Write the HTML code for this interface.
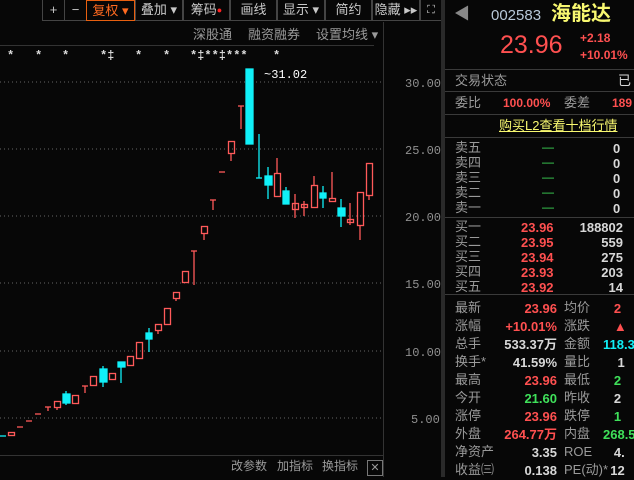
<!DOCTYPE html><html><head><meta charset="utf-8"><style>
body{margin:0;width:634px;height:477px;background:#070707;overflow:hidden;position:relative;font-family:"Liberation Sans","Noto Sans CJK SC",sans-serif;}
.a{position:absolute;white-space:nowrap;line-height:1;}
.g{color:#9a9a9a}.r{color:#ff5050}.gr{color:#3fe05a}.w{color:#d8d8d8}.c{color:#10f0f8}.y{color:#f8f870}
.tb{position:absolute;top:0;height:21px;border:1px solid #444;border-top:none;color:#c8c8c8;font-size:13px;text-align:center;line-height:20px;box-sizing:border-box}
.hl{position:absolute;left:445px;width:189px;height:1px;background:#3a3a3a}
.rt{font-size:13px}
.n{font-weight:bold;font-size:13px}
</style></head><body>
<div class="tb" style="left:42px;width:23px">+</div>
<div class="tb" style="left:64px;width:23px">−</div>
<div class="tb" style="left:86px;width:49px;border:1px solid #e86010;color:#ff6a20">复权 ▾</div>
<div class="tb" style="left:135px;width:48px">叠加 ▾</div>
<div class="tb" style="left:183px;width:47px">筹码<span style="color:#f22;font-size:9px;vertical-align:top">●</span></div>
<div class="tb" style="left:230px;width:47px">画线</div>
<div class="tb" style="left:277px;width:48px">显示 ▾</div>
<div class="tb" style="left:325px;width:47px">简约</div>
<div class="tb" style="left:372px;width:48px">隐藏 ▸▸</div>
<div class="tb" style="left:420px;width:22px;font-size:11px">⛶</div>
<div class="a g" style="left:193px;top:28px;font-size:13px">深股通</div>
<div class="a g" style="left:248px;top:28px;font-size:13px">融资融券</div>
<div class="a g" style="left:316px;top:28px;font-size:13px">设置均线 ▾</div>
<div style="position:absolute;left:0;top:45px;width:374px;height:1px;background:#333"></div>
<div style="position:absolute;left:383px;top:22px;width:1px;height:455px;background:#333"></div>
<div style="position:absolute;left:441px;top:0;width:4px;height:477px;background:#2a2a2a"></div>
<div style="position:absolute;left:0;top:455px;width:383px;height:1px;background:#333"></div>
<div class="a g" style="left:231px;top:460px;font-size:12px">改参数</div>
<div class="a g" style="left:277px;top:460px;font-size:12px">加指标</div>
<div class="a g" style="left:322px;top:460px;font-size:12px">换指标</div>
<div class="a g" style="left:367px;top:460px;width:14px;height:14px;border:1px solid #777;text-align:center;font-size:11px;line-height:14px">✕</div>
<svg style="position:absolute;left:0;top:0" width="445" height="477">
<g stroke="#666" stroke-dasharray="1,3">
<line x1="0" y1="82" x2="381" y2="82"/><line x1="0" y1="149" x2="381" y2="149"/><line x1="0" y1="216" x2="381" y2="216"/><line x1="0" y1="283" x2="381" y2="283"/><line x1="0" y1="351" x2="381" y2="351"/><line x1="0" y1="418" x2="381" y2="418"/></g>
<g fill="#909090" font-family="Liberation Mono,monospace" font-size="12"><text x="405" y="87">30.00</text><text x="405" y="154">25.00</text><text x="405" y="221">20.00</text><text x="405" y="288">15.00</text><text x="405" y="356">10.00</text><text x="411" y="423">5.00</text></g>
<g fill="#ddd" font-size="12" font-weight="bold" font-family="Liberation Mono,monospace"><text x="7" y="59">*</text><text x="35" y="59">*</text><text x="62" y="59">*</text><text x="100" y="59">*‡</text><text x="135" y="59">*</text><text x="163" y="59">*</text><text x="190" y="59">*‡**‡***</text><text x="273" y="59">*</text></g>
<text x="264" y="78" fill="#fff" font-size="12" font-family="Liberation Mono,monospace">~31.02</text>
<g stroke="#ff5a5a" fill="none" stroke-width="1.3">
<rect x="8.5" y="432.5" width="6" height="3"/><line x1="17" y1="427" x2="23" y2="427"/><line x1="26" y1="421" x2="32" y2="421"/><line x1="35" y1="414" x2="41" y2="414"/><line x1="45" y1="407" x2="51" y2="407"/><line x1="48" y1="407" x2="48" y2="411"/>
<rect x="54.5" y="401.5" width="6" height="6"/><line x1="57" y1="407" x2="57" y2="410"/><rect x="72.5" y="395.5" width="6" height="8"/><line x1="82" y1="386" x2="88" y2="386"/><line x1="85" y1="386" x2="85" y2="393"/>
<rect x="90.5" y="376.5" width="6" height="9"/><rect x="109.5" y="373.5" width="6" height="6"/><rect x="127.5" y="356.5" width="6" height="9"/><rect x="136.5" y="342.5" width="6" height="16"/>
<rect x="155.5" y="324.5" width="6" height="6"/><line x1="158" y1="330" x2="158" y2="334"/><rect x="164.5" y="308.5" width="6" height="16"/><rect x="173.5" y="292.5" width="6" height="6"/><line x1="176" y1="298" x2="176" y2="301"/><rect x="182.5" y="271.5" width="6" height="11"/>
<line x1="191" y1="251" x2="197" y2="251"/><line x1="194" y1="251" x2="194" y2="285"/><rect x="201.5" y="226.5" width="6" height="7"/><line x1="204" y1="233" x2="204" y2="240"/>
<line x1="210" y1="200" x2="216" y2="200"/><line x1="213" y1="200" x2="213" y2="210"/><line x1="219" y1="172" x2="225" y2="172"/>
<rect x="228.5" y="141.5" width="6" height="12"/><line x1="231" y1="153" x2="231" y2="161"/><line x1="238" y1="106" x2="244" y2="106"/><line x1="241" y1="106" x2="241" y2="129"/>
<rect x="274.5" y="173.5" width="6" height="23"/><line x1="277" y1="158" x2="277" y2="173"/><rect x="292.5" y="203.5" width="6" height="6"/><line x1="295" y1="194" x2="295" y2="218"/>
<rect x="301.5" y="204.5" width="6" height="3"/><line x1="304" y1="201" x2="304" y2="216"/><rect x="311.5" y="185.5" width="6" height="22"/><line x1="314" y1="176" x2="314" y2="185"/>
<rect x="329.5" y="198.5" width="6" height="3"/><line x1="332" y1="172" x2="332" y2="198"/><rect x="347.5" y="219.5" width="6" height="3"/><line x1="350" y1="203" x2="350" y2="225"/>
<rect x="357.5" y="192.5" width="6" height="33"/><line x1="360" y1="225" x2="360" y2="240"/><rect x="366.5" y="163.5" width="6" height="32"/><line x1="369" y1="195" x2="369" y2="200"/>
</g>
<g fill="#10f0f8" stroke="#10f0f8" stroke-width="1.3">
<line x1="0" y1="436" x2="6" y2="436"/><line x1="66" y1="391" x2="66" y2="405"/><rect x="63" y="394" width="7" height="9"/>
<line x1="103" y1="366" x2="103" y2="387"/><rect x="100" y="369" width="7" height="13"/><line x1="121" y1="362" x2="121" y2="383"/><rect x="118" y="362" width="7" height="5"/>
<line x1="149" y1="328" x2="149" y2="352"/><rect x="146" y="333" width="6" height="6"/><rect x="246" y="69" width="7" height="75"/>
<line x1="259" y1="134" x2="259" y2="178"/><line x1="256" y1="178" x2="262" y2="178"/><line x1="268" y1="167" x2="268" y2="199"/><rect x="265" y="176" width="7" height="9"/>
<line x1="286" y1="187" x2="286" y2="191"/><rect x="283" y="191" width="6" height="13"/><line x1="323" y1="186" x2="323" y2="208"/><rect x="320" y="193" width="6" height="5"/>
<line x1="341" y1="199" x2="341" y2="227"/><rect x="338" y="208" width="7" height="8"/></g>
</svg>
<div class="a g" style="left:454px;top:7px;font-size:16px;color:#888">◀</div>
<div class="a" style="left:491px;top:8px;font-size:15px;color:#b8c8d8">002583</div>
<div class="a y" style="left:551px;top:4px;font-size:20px;font-weight:bold">海能达</div>
<div class="a r" style="left:500px;top:33px;font-size:25px">23.96</div>
<div class="a r" style="left:580px;top:32px;font-size:12px;font-weight:bold">+2.18</div>
<div class="a r" style="left:580px;top:49px;font-size:12px;font-weight:bold">+10.01%</div>
<div class="hl" style="top:69px"></div>
<div class="a g rt" style="left:455px;top:74px">交易状态</div><div class="a w rt" style="left:618px;top:74px">已</div>
<div class="hl" style="top:91px"></div>
<div class="a g rt" style="left:455px;top:96px">委比</div><div class="a r" style="left:503px;top:97px;font-size:12px;font-weight:bold">100.00%</div><div class="a g rt" style="left:564px;top:96px">委差</div><div class="a r" style="left:612px;top:97px;font-size:12px;font-weight:bold">189</div>
<div class="hl" style="top:114px"></div>
<div class="a y" style="left:499px;top:119px;font-size:13px;text-decoration:underline">购买L2查看十档行情</div>
<div class="hl" style="top:137px"></div>
<div class="a g" style="left:455px;top:140px;font-size:13px;line-height:15px">卖五<br>卖四<br>卖三<br>卖二<br>卖一</div>
<div class="a gr" style="left:542px;top:140px;font-size:12px;line-height:15px">—<br>—<br>—<br>—<br>—</div>
<div class="a w n" style="left:613px;top:141px;line-height:15px">0<br>0<br>0<br>0<br>0</div>
<div class="hl" style="top:217px"></div>
<div class="a g" style="left:455px;top:219px;font-size:13px;line-height:15px">买一<br>买二<br>买三<br>买四<br>买五</div>
<div class="a r n" style="left:521px;top:220px;line-height:15px">23.96<br>23.95<br>23.94<br>23.93<br>23.92</div>
<div class="a w n" style="left:573px;top:220px;line-height:15px;text-align:right;width:50px">188802<br>559<br>275<br>203<br>14</div>
<div class="hl" style="top:294px"></div>
<div class="a g" style="left:455px;top:299px;font-size:13px;line-height:18px">最新<br>涨幅<br>总手<br>换手*<br>最高<br>今开<br>涨停<br>外盘<br>净资产<br>收益㈢</div>
<div class="a n" style="left:494px;top:300px;line-height:18px;text-align:right;width:63px"><span class="r">23.96</span><br><span class="r">+10.01%</span><br><span class="w">533.37万</span><br><span class="w">41.59%</span><br><span class="r">23.96</span><br><span class="gr">21.60</span><br><span class="r">23.96</span><br><span class="r">264.77万</span><br><span class="w">3.35</span><br><span class="w">0.138</span></div>
<div class="a g" style="left:564px;top:299px;font-size:13px;line-height:18px">均价<br>涨跌<br>金额<br>量比<br>最低<br>昨收<br>跌停<br>内盘<br>ROE<br>PE(动)*</div>
<div class="a n" style="left:603px;top:300px;line-height:18px"><span class="r">&nbsp;&nbsp;&nbsp;2</span><br><span class="r">&nbsp;&nbsp;&nbsp;▲</span><br><span class="c">118.3</span><br><span class="w">&nbsp;&nbsp;&nbsp;&nbsp;1</span><br><span class="gr">&nbsp;&nbsp;&nbsp;2</span><br><span class="w">&nbsp;&nbsp;&nbsp;2</span><br><span class="gr">&nbsp;&nbsp;&nbsp;1</span><br><span class="gr">268.5</span><br><span class="w">&nbsp;&nbsp;&nbsp;4.</span><br><span class="w">&nbsp;&nbsp;12</span></div>
</body></html>
